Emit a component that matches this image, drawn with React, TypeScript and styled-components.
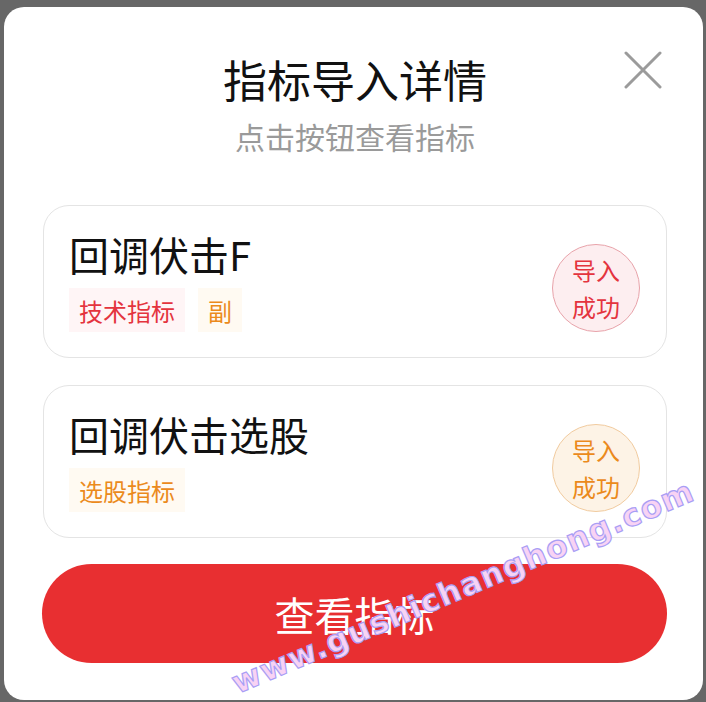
import React, { FC } from 'react';
import styled, { createGlobalStyle } from 'styled-components';

const GlobalStyle = createGlobalStyle`
  html, body {
    margin: 0;
    padding: 0;
    background: #676767;
  }

  body {
    font-family: 'Noto Sans CJK SC', 'Noto Sans', sans-serif;
  }
`;

const Backdrop = styled.div`
  position: relative;
  width: 706px;
  height: 702px;
  box-sizing: border-box;
  padding: 7px 3px 2px 4px;
  background: #676767;
  overflow: hidden;
`;

const Dialog = styled.div`
  position: relative;
  height: 100%;
  box-sizing: border-box;
  padding: 46px 36px 0 39px;
  background: #ffffff;
  border-radius: 20px;
  display: flex;
  flex-direction: column;
`;

const Header = styled.div`
  display: flex;
  flex-direction: column;
  align-items: center;
  margin-bottom: 51px;
`;

const Title = styled.h1`
  margin: 0;
  font-size: 44px;
  line-height: 52px;
  font-weight: 400;
  color: #111111;
`;

const Subtitle = styled.p`
  margin: 13px 0 0;
  font-size: 30px;
  line-height: 36px;
  color: #9a9a9a;
`;

const CloseButton = styled.button`
  position: absolute;
  top: 43px;
  right: 40px;
  width: 40px;
  height: 40px;
  padding: 0;
  border: none;
  background: transparent;
  display: flex;
  align-items: center;
  justify-content: center;
`;

const List = styled.div`
  display: flex;
  flex-direction: column;
  gap: 27px;
`;

const Card = styled.div`
  display: flex;
  align-items: center;
  justify-content: space-between;
  height: 153px;
  box-sizing: border-box;
  padding: 25px 26px 26px 25px;
  border: 1px solid #e4e4e4;
  border-radius: 26px;
`;

const Info = styled.div`
  display: flex;
  flex-direction: column;
  gap: 10px;
`;

const Name = styled.div`
  font-size: 40px;
  line-height: 48px;
  color: #111111;
`;

const Tags = styled.div`
  display: flex;
  gap: 13px;
`;

type Tone = 'red' | 'orange';

const palette: Record<Tone, { text: string; bg: string; border: string; fill: string }> = {
  red: { text: '#e4343e', bg: '#fff5f6', border: '#e8a3aa', fill: '#fdeef0' },
  orange: { text: '#eb8a1c', bg: '#fffaf2', border: '#f1cb9f', fill: '#fdf3e6' },
};

const Tag = styled.span<{ $tone: Tone }>`
  height: 44px;
  padding: 0 10px;
  display: flex;
  align-items: center;
  font-size: 24px;
  color: ${(p) => palette[p.$tone].text};
  background: ${(p) => palette[p.$tone].bg};
`;

const Badge = styled.div<{ $tone: Tone }>`
  width: 88px;
  height: 88px;
  margin-top: 13px;
  box-sizing: border-box;
  border-radius: 50%;
  border: 1px solid ${(p) => palette[p.$tone].border};
  background: ${(p) => palette[p.$tone].fill};
  color: ${(p) => palette[p.$tone].text};
  display: flex;
  flex-direction: column;
  align-items: center;
  justify-content: center;
  font-size: 24px;
  line-height: 37px;
`;

const ViewButton = styled.button`
  margin-top: 26px;
  margin-left: -1px;
  height: 99px;
  border: none;
  border-radius: 50px;
  background: #e82f31;
  color: #ffffff;
  font-family: 'Noto Sans CJK SC', 'Noto Sans', sans-serif;
  font-size: 40px;
`;

const Watermark = styled.span`
  position: absolute;
  left: 238px;
  top: 668px;
  transform-origin: 0 27px;
  transform: rotate(-23deg);
  font-family: 'DejaVu Sans', sans-serif;
  font-weight: 700;
  font-size: 31px;
  line-height: 1;
  letter-spacing: 1.4px;
  white-space: nowrap;
  color: #f8d3f4;
  -webkit-text-stroke: 1.2px #a99ef5;
  pointer-events: none;
`;

interface Indicator {
  name: string;
  tags: { label: string; tone: Tone }[];
  tone: Tone;
}

const indicators: Indicator[] = [
  {
    name: '回调伏击F',
    tags: [
      { label: '技术指标', tone: 'red' },
      { label: '副', tone: 'orange' },
    ],
    tone: 'red',
  },
  {
    name: '回调伏击选股',
    tags: [{ label: '选股指标', tone: 'orange' }],
    tone: 'orange',
  },
];

const App: FC = () => (
  <Backdrop>
    <GlobalStyle />
    <Dialog>
      <Header>
        <Title>指标导入详情</Title>
        <Subtitle>点击按钮查看指标</Subtitle>
      </Header>
      <CloseButton aria-label="关闭">
        <svg width="38" height="38" viewBox="0 0 38 38">
          <path d="M2 2 L36 36 M36 2 L2 36" stroke="#9b9b9b" strokeWidth="3" strokeLinecap="round" />
        </svg>
      </CloseButton>

      <List>
        {indicators.map((item) => (
          <Card key={item.name}>
            <Info>
              <Name>{item.name}</Name>
              <Tags>
                {item.tags.map((t) => (
                  <Tag key={t.label} $tone={t.tone}>
                    {t.label}
                  </Tag>
                ))}
              </Tags>
            </Info>
            <Badge $tone={item.tone}>
              <span>导入</span>
              <span>成功</span>
            </Badge>
          </Card>
        ))}
      </List>

      <ViewButton>查看指标</ViewButton>
    </Dialog>
    <Watermark>www.gushichanghong.com</Watermark>
  </Backdrop>
);

export default App;
